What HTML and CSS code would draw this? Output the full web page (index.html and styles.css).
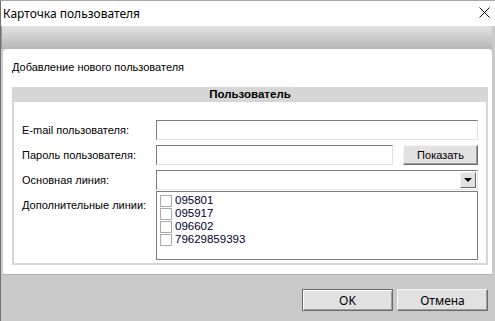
FILE: index.html
```html
<!DOCTYPE html>
<html lang="ru">
<head>
<meta charset="utf-8">
<title>Карточка пользователя</title>
<link rel="stylesheet" href="styles.css">
</head>
<body>
<div class="window">
  <div class="titlebar">
    <span class="title">Карточка пользователя</span>
    <svg class="close" width="11" height="11" viewBox="0 0 11 11"><path d="M0.5 0.5 L10.5 10.5 M10.5 0.5 L0.5 10.5" stroke="#111" stroke-width="1" fill="none"/></svg>
  </div>
  <div class="client">
    <div class="band"></div>
    <div class="panel">
      <div class="intro">Добавление нового пользователя</div>
      <div class="group">
        <div class="group-head">Пользователь</div>
        <div class="group-body">
          <div class="row">
            <label class="lbl">E-mail пользователя:</label>
            <div class="field"></div>
          </div>
          <div class="row">
            <label class="lbl">Пароль пользователя:</label>
            <div class="pass">
              <div class="field"></div>
              <button class="btn show">Показать</button>
            </div>
          </div>
          <div class="row">
            <label class="lbl">Основная линия:</label>
            <div class="field select"><span class="arrow"><i></i></span></div>
          </div>
          <div class="row row-list">
            <label class="lbl">Дополнительные линии:</label>
            <div class="list">
              <div class="item"><span class="cb"></span>095801</div>
              <div class="item"><span class="cb"></span>095917</div>
              <div class="item"><span class="cb"></span>096602</div>
              <div class="item"><span class="cb"></span>79629859393</div>
            </div>
          </div>
        </div>
      </div>
    </div>
    <div class="footer">
      <button class="btn dlg ok">OK</button>
      <button class="btn dlg">Отмена</button>
    </div>
  </div>
</div>
</body>
</html>
```
FILE: styles.css
```css
html, body {
  margin: 0;
  padding: 0;
}
body {
  width: 495px;
  height: 321px;
  overflow: hidden;
  font-family: "Liberation Sans", Arial, sans-serif;
  font-size: 11px;
  color: #000;
}
.window {
  height: 321px;
  box-sizing: border-box;
  border-left: 1px solid #707070;
  border-top: 1px solid #a8a8a8;
  display: flex;
  flex-direction: column;
  background: #fff;
}
.titlebar {
  height: 25px;
  flex: none;
  display: flex;
  align-items: center;
  justify-content: space-between;
  padding: 0 5px 0 2px;
}
.title {
  font-family: "Noto Sans", "Open Sans", sans-serif;
  font-size: 12px;
  color: #000;
  margin-top: -1px;
}
.close {
  margin-top: -2px;
}
.client {
  flex: 1;
  display: flex;
  flex-direction: column;
  background: #c9c9c9;
}
.band {
  height: 23px;
  flex: none;
  background: linear-gradient(#e3e3e3, #b6b6b6);
  border-left: 1px solid #9a9a9a;
  margin-right: 3px;
}
.panel {
  height: 226px;
  flex: none;
  box-sizing: border-box;
  background: #fff;
  margin: 0 3px 0 2px;
  border-radius: 4px 4px 0 0;
  padding: 12px 4px 0 9px;
  border-bottom: 1px solid #b0b0b0;
}
.intro {
  height: 13px;
  line-height: 13px;
  margin-bottom: 13px;
}
.group {
  width: 476px;
  height: 178px;
  box-sizing: border-box;
  background: #d6d6d6;
  padding: 0 2px 2px;
  display: flex;
  flex-direction: column;
}
.group-head {
  height: 15px;
  line-height: 15px;
  text-align: center;
  font-weight: bold;
  font-size: 11.5px;
}
.group-body {
  flex: 1;
  background: #fff;
  padding: 18px 8px 0 8px;
  display: flex;
  flex-direction: column;
}
.row {
  display: grid;
  grid-template-columns: 134px 1fr;
  align-items: center;
  margin-bottom: 5px;
}
.row-list {
  align-items: start;
  margin-bottom: 0;
  margin-top: -4px;
}
.row-list .lbl {
  padding-top: 8px;
}
.lbl {
  color: #000;
}
.field {
  height: 20px;
  box-sizing: border-box;
  border-top: 1px solid #7a7a7a;
  border-left: 1px solid #7a7a7a;
  border-right: 1px solid #e3e3e3;
  border-bottom: 1px solid #e3e3e3;
  background: #fff;
}
.pass {
  display: flex;
  gap: 10px;
}
.pass .field {
  flex: 1;
}
.btn {
  font-family: "Liberation Sans", Arial, sans-serif;
  font-size: 11px;
  color: #000;
  background: #e1e1e1;
  border-top: 1px solid #f4f4f4;
  border-left: 1px solid #f4f4f4;
  border-right: 1px solid #6a6a6a;
  border-bottom: 1px solid #6a6a6a;
  box-shadow: inset -1px -1px 0 #a0a0a0;
  padding: 0;
  margin: 0;
}
.show {
  width: 75px;
  height: 20px;
}
.select {
  display: flex;
  justify-content: flex-end;
  align-items: center;
  padding-right: 1px;
}
.arrow {
  width: 16px;
  height: 16px;
  box-sizing: border-box;
  background: #e1e1e1;
  border-top: 1px solid #f4f4f4;
  border-left: 1px solid #f4f4f4;
  border-right: 1px solid #6a6a6a;
  border-bottom: 1px solid #6a6a6a;
  display: flex;
  align-items: center;
  justify-content: center;
}
.arrow i {
  width: 0;
  height: 0;
  border-left: 4px solid transparent;
  border-right: 4px solid transparent;
  border-top: 4px solid #000;
}
.list {
  height: 69px;
  box-sizing: border-box;
  border: 1px solid #7a7a7a;
  padding: 2px 0 0 3px;
  background: #fff;
}
.item {
  display: flex;
  align-items: center;
  height: 13px;
  line-height: 13px;
  font-size: 11.5px;
  color: #000033;
}
.cb {
  width: 12px;
  height: 12px;
  box-sizing: border-box;
  border: 1px solid #aaaaaa;
  background: #fff;
  margin-right: 3px;
}
.footer {
  flex: 1;
  display: flex;
  justify-content: flex-end;
  align-items: flex-start;
  gap: 4px;
  padding: 14px 7px 0 0;
}
.dlg {
  width: 91px;
  height: 22px;
  font-family: "Noto Sans", "Open Sans", sans-serif;
  font-size: 12px;
}
.ok {
  border: 1px solid #6a6a6a;
  box-shadow: inset 1px 1px 0 #fff, inset -1px -1px 0 #a0a0a0;
}
```
